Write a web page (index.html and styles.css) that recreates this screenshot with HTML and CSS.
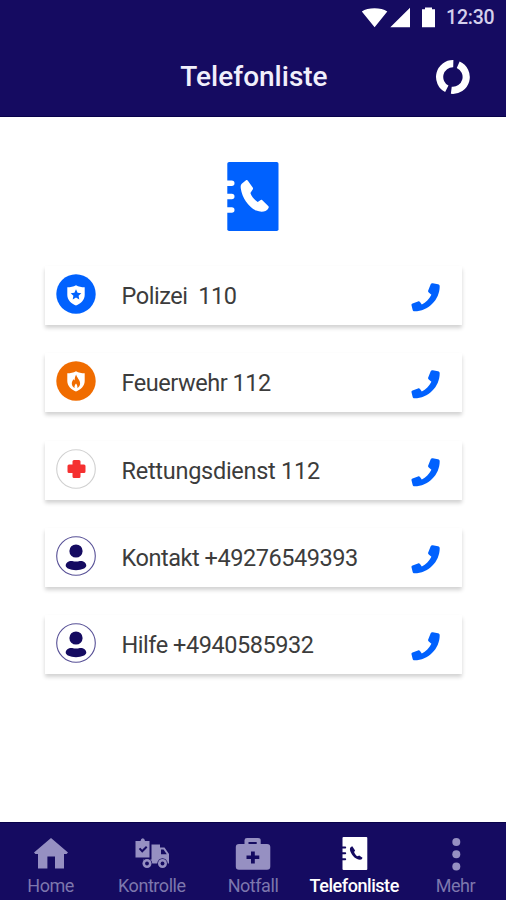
FILE: index.html
```html
<!DOCTYPE html>
<html lang="de">
<head>
<meta charset="utf-8">
<title>Telefonliste</title>
<link rel="stylesheet" href="styles.css">
</head>
<body>
<svg class="defs" aria-hidden="true">
  <symbol id="phone" viewBox="0 0 29 29"><path d="M21.800.2l5.200 1.100c1.100.3 1.700.8 1.700 1.900C28.700 16.800 17.200 28.200 3.600 28.300c-1.200 0-1.700-.5-2-1.600L.5 22.300c-.2-1 .2-1.600 1.100-1.900l5.400-1.900c.9-.3 1.500-.1 2 .6l1.800 2.300c4-2 7.500-5.300 9.600-9.700l-2.600-2.300c-.7-.6-.9-1.200-.5-2.100l2.400-6.100c.4-.9 1.100-1.200 2.100-1z"/></symbol>
  <symbol id="person" viewBox="0 0 40 40"><circle cx="20" cy="20" r="19.300" fill="#fff" stroke="#575096" stroke-width="1.1"/><circle cx="20" cy="15" r="6.600" fill="#150b61"/><path d="M9.700 29.600c0-3 3.200-5 6.500-4.600 2.700.8 4.900.8 7.600 0 3.300-.4 6.500 1.600 6.500 4.600 0 2.700-4.500 4.600-10.300 4.600S9.700 32.300 9.700 29.600z" fill="#150b61"/></symbol>
  <symbol id="shield" viewBox="0 0 18 21"><path d="M9 .2c2.600 1.400 5.500 1.900 8.700 2.100V10c0 5-4 8.600-8.700 10.600C4.300 18.600.3 15 .3 10V2.300C3.500 2.100 6.400 1.600 9 .2z" fill="#fff"/></symbol>
</svg>
<div class="screen">
  <header class="top">
    <div class="status">
      <svg class="signals" viewBox="0 0 76 22" width="76" height="22"><path d="M.8 4.500C7 .2 20 .2 26.300 4.500L13.600 20.300zM29.300 20.300 49 .7v19.600zM61 2.300h3V.6h7v1.700h3v18H61z" fill="#fff"/></svg>
      <span class="time">12:30</span>
    </div>
    <div class="titlebar">
      <h1>Telefonliste</h1>
      <svg class="sync" viewBox="-18 -17 36 34" width="36" height="34"><g fill="none" stroke="#fff" stroke-width="7.200"><path d="M.3-13.300A13.300 13.300 0 0 0-6.200 11.800"/><path d="M5.200-12.200A13.300 13.300 0 0 1-1.700 13.200"/></g></svg>
    </div>
  </header>
  <main>
    <svg class="book" viewBox="0 0 52 69" width="52" height="69"><rect x=".3" width="51.200" height="69" rx="1.800" fill="#0061fe"/><path d="M0 21.200h4.800M0 34.500h4.800M0 48h4.800" stroke="#fff" stroke-width="5.400" stroke-linecap="round"/><path d="M19 18.300 15 21.400c-1.400 1.200-1.500 3-1.200 5 1.200 9 7.600 18.500 15.400 22.200 3.300 1.400 6.800 1.300 9.300.5 1.700-.7 2.700-2.100 3.200-3.500.2-.6 0-1-.5-1.500l-5.600-5.700c-.6-.6-1.100-.7-1.900-.3l-3 1.800c-3.400-2.200-6-5.400-7.300-9l2.300-3.500c.5-.7.5-1.300 0-2l-5-6.900c-.5-.7-1.100-.7-1.700-.2z" fill="#fff"/></svg>
    <ul class="list">
      <li class="card">
        <svg class="avatar" viewBox="0 0 40 40"><circle cx="20" cy="20" r="19.700" fill="#0061fe"/><use href="#shield" x="11" y="11" width="18" height="21"/><path d="m20 15.300 1.600 3.400 3.700.5-2.700 2.500.7 3.700-3.300-1.800-3.300 1.800.7-3.700-2.700-2.500 3.700-.5z" fill="#0061fe"/></svg>
        <span class="name">Polizei&nbsp; 110</span><svg class="call"><use href="#phone"/></svg>
      </li>
      <li class="card">
        <svg class="avatar" viewBox="0 0 40 40"><circle cx="20" cy="20" r="19.700" fill="#f06c00"/><use href="#shield" x="11" y="10" width="18" height="21"/><path d="M20.200 13.500c.2 3 3.900 5 3.900 9 0 2.100-1.200 3.600-2.800 4.500.4-2-.2-3-1.300-4.600-1.200 1.600-1.800 2.600-1.300 4.600-1.700-.8-2.900-2.300-2.900-4.400 0-1.900 1-3.200 1.900-4.300l1 1.200c-.1-2.200.3-4 1.500-6z" fill="#f06c00"/></svg>
        <span class="name">Feuerwehr 112</span><svg class="call"><use href="#phone"/></svg>
      </li>
      <li class="card">
        <svg class="avatar" viewBox="0 0 40 40"><circle cx="20" cy="20" r="19.300" fill="#fff" stroke="#d0d0d0" stroke-width="1.100"/><path d="M18 11h5q1.500 0 1.500 1.500V15.500H28q1.500 0 1.500 1.500v5.500q0 1.500-1.500 1.500h-3.500v3.500Q24.500 29 23 29h-5q-1.500 0-1.500-1.500V24H13q-1.500 0-1.500-1.500V17q0-1.500 1.500-1.500h3.500v-3Q16.500 11 18 11z" fill="#f53030"/></svg>
        <span class="name wide">Rettungsdienst 112</span><svg class="call"><use href="#phone"/></svg>
      </li>
      <li class="card">
        <svg class="avatar"><use href="#person"/></svg>
        <span class="name">Kontakt +49276549393</span><svg class="call"><use href="#phone"/></svg>
      </li>
      <li class="card">
        <svg class="avatar"><use href="#person"/></svg>
        <span class="name">Hilfe +4940585932</span><svg class="call"><use href="#phone"/></svg>
      </li>
    </ul>
  </main>
  <nav>
    <a class="tab"><svg viewBox="0 0 36 34" width="36" height="34"><path d="M18 1 35 15.500 33.500 17H31v14.500h-9V19.600h-7.600v11.900H5V17H2.400L1 15.500z"/></svg><span>Home</span></a>
    <a class="tab"><svg viewBox="0 0 36 34" width="36" height="34"><path d="M17.500 7.500H26v3h4.500l4.500 6.500v9.500H9v-4h8.500z"/><path class="cut" d="M27 12.500h2.500l3.300 4.800H27z"/><path fill-rule="evenodd" d="M2 4h4.500Q7 1.200 8.800 1.200T11 4h4.500v16.500H1.500V4zM4.800 12l3.400 3.700 5.200-5.300-1.400-1.400-3.800 3.700-1.900-2z"/><circle class="cut" cx="13" cy="26.500" r="5.200"/><circle cx="13" cy="26.500" r="4.500"/><circle class="cut" cx="13" cy="26.500" r="1.900"/><circle class="cut" cx="28.500" cy="26.500" r="5.200"/><circle cx="28.500" cy="26.500" r="4.500"/><circle class="cut" cx="28.500" cy="26.500" r="1.900"/></svg><span>Kontrolle</span></a>
    <a class="tab"><svg viewBox="0 0 36 34" width="36" height="34"><path fill-rule="evenodd" d="M9.500 7V3.200Q9.500 1 12 1h11q2.700 0 2.700 2.200V7H32q3.300 0 3.300 3v19.500q0 3.200-3.300 3.200H4Q.8 32.700.8 29.500V10Q.8 7 4 7zm4 0h8.200V5H13.500zm2.500 7.500v4h-4.500v3.500H16v4.500h3.800V22h4.500v-3.500h-4.500v-4z"/></svg><span>Notfall</span></a>
    <a class="tab active"><svg viewBox="0 0 36 34" width="36" height="34"><rect x="6.500" y="0" width="24.800" height="33" rx="1"/><path class="line" d="M6 10.400h3.200M6 16.300h3.200M6 22.200h3.200"/><path class="cut" d="M16.300 9.300c-3 1-2.600 3.400-1.700 5.700 1.900 4.500 5.400 7.500 9.400 7.700 1.500 0 2.200-.7 2.500-2l-3.300-2.200-1.600.8c-1.600-.8-3-2.600-3.500-4.400l1-1.400z"/></svg><span>Telefonliste</span></a>
    <a class="tab"><svg viewBox="0 0 36 34" width="36" height="34"><circle cx="19.300" cy="5" r="4"/><circle cx="19.300" cy="17.200" r="4"/><circle cx="19.300" cy="29.400" r="4"/></svg><span>Mehr</span></a>
  </nav>
</div>
</body>
</html>
```

FILE: styles.css
```css
* { box-sizing: border-box; }
body { margin: 0; background: #fff; font-family: Roboto, "Liberation Sans", sans-serif; }
.defs { position: absolute; width: 0; height: 0; }
.screen { display: flex; flex-direction: column; width: 506px; height: 900px; }
.top { height: 117px; background: #150b61; border-bottom: 1px solid #08024a; color: #fff; }
.status { display: flex; justify-content: flex-end; height: 36px; padding: 7px 11px 0 0; }
.signals { margin-right: 9px; }
.time { width: 49px; font-size: 19.500px; font-weight: 500; line-height: 22px; letter-spacing: -.2px; color: #d4d0ec; white-space: nowrap; }
.titlebar { display: grid; grid-template-columns: 1fr auto 1fr; align-items: center; height: 82px; padding: 0 35px 0 37px; }
h1 { grid-column: 2; margin: 0; font-size: 28px; font-weight: 500; line-height: 36px; white-space: nowrap; color: #f1effb; }
.sync { justify-self: end; }
main { flex: 1; display: flex; flex-direction: column; align-items: center; padding-top: 45px; }
.book { margin-bottom: 35px; }
.list { display: flex; flex-direction: column; gap: 28.250px; width: 417px; margin: 0; padding: 0; list-style: none; }
.card { display: flex; align-items: center; height: 59px; padding: 0 22px 0 11px; background: #fff; box-shadow: 0 3px 4px rgba(0, 0, 0, .18); }
.avatar { width: 40px; height: 40px; margin: -3px 26px 0 0; }
.name { flex: 1; padding-top: 1px; font-size: 23.500px; line-height: 30px; letter-spacing: -.46px; color: #3c3c3c; white-space: nowrap; }
.name.wide { letter-spacing: -.27px; }
.call { width: 29px; height: 29px; margin-top: 4px; fill: #0061fe; }
nav { display: grid; grid-template-columns: repeat(5, 1fr); height: 78px; padding-top: 14px; background: #150b61; border-top: 1px solid #08024a; }
.tab { display: flex; flex-direction: column; align-items: center; color: #7d77ad; font-size: 18px; line-height: 22px; letter-spacing: -.45px; }
.tab svg { fill: #9690c2; }
.tab span { margin-top: 4px; white-space: nowrap; }
.tab.active { color: #fff; font-weight: 500; }
.tab.active svg { fill: #fff; }
.tab .cut { fill: #150b61; }
.tab .line { fill: none; stroke: #150b61; stroke-width: 2; stroke-linecap: round; }
```
